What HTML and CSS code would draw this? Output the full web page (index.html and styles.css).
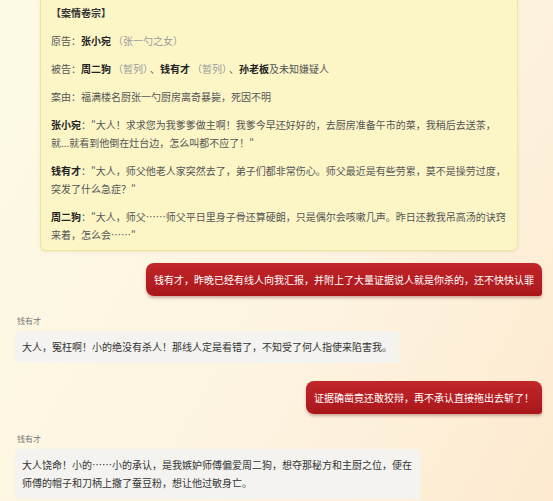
FILE: index.html
```html
<!DOCTYPE html>
<html lang="zh-CN">
<head>
  <meta charset="UTF-8" />
  <meta name="viewport" content="width=device-width, initial-scale=1.0"/>
  <title>案情审讯</title>
  <link rel="stylesheet" href="styles.css">
</head>
<body>
  <div class="chat">
    <div class="case-card">
      <p class="case-title">【案情卷宗】</p>
      <p>原告：<b>张小宛</b><span class="note">（张一勺之女）</span></p>
      <p>被告：<b>周二狗</b><span class="note">（暂列）</span>、<b>钱有才</b><span class="note">（暂列）</span>、<b>孙老板</b>及未知嫌疑人</p>
      <p>案由：福满楼名厨张一勺厨房离奇暴毙，死因不明</p>
      <p><b>张小宛</b><span>："大人！求求您为我爹爹做主啊！我爹今早还好好的，去厨房准备午市的菜，我稍后去送茶，就...就看到他倒在灶台边，怎么叫都不应了！"</span></p>
      <p><b>钱有才</b><span>："大人，师父他老人家突然去了，弟子们都非常伤心。师父最近是有些劳累，莫不是操劳过度，突发了什么急症？"</span></p>
      <p><b>周二狗</b><span>："大人，师父……师父平日里身子骨还算硬朗，只是偶尔会咳嗽几声。昨日还教我吊高汤的诀窍来着，怎么会……"</span></p>
    </div>

    <div class="msg msg-out">
      <div class="bubble bubble-red">钱有才，昨晚已经有线人向我汇报，并附上了大量证据说人就是你杀的，还不快快认罪</div>
    </div>

    <div class="msg msg-in">
      <div class="sender">钱有才</div>
      <div class="bubble bubble-grey">大人，冤枉啊！小的绝没有杀人！那线人定是看错了，不知受了何人指使来陷害我。</div>
    </div>

    <div class="msg msg-out">
      <div class="bubble bubble-red">证据确凿竟还敢狡辩，再不承认直接拖出去斩了！</div>
    </div>

    <div class="msg msg-in">
      <div class="sender">钱有才</div>
      <div class="bubble bubble-grey">大人饶命！小的……小的承认，是我嫉妒师傅偏爱周二狗，想夺那秘方和主厨之位，便在师傅的帽子和刀柄上撒了蚕豆粉，想让他过敏身亡。</div>
    </div>
  </div>
</body>
</html>
```

FILE: styles.css
```css
body {
  margin: 0;
  height: 100vh;
  overflow: hidden;
  font-family: "Noto Sans CJK SC", "Noto Sans", sans-serif;
  font-size: 10px;
  color: #333;
  background: linear-gradient(120deg, #fcfae5 0%, #fdf3e0 60%, #fdeacf 100%);
}

.chat {
  display: flex;
  flex-direction: column;
  padding: 0 11px 0 15px;
}

.case-card {
  margin-left: 25px;
  width: 456px;
  padding: 4px 10px 6px;
  background: #fcf6c7;
  border: 1px solid #efe5a3;
  border-top: none;
  border-radius: 0 0 6px 6px;
  box-shadow: 0 1px 3px rgba(160, 140, 60, 0.15);
  color: #555;
}

.case-card p {
  margin: 10px 0 0;
  line-height: 18px;
}

.case-card p:first-child {
  margin-top: 0;
}

.case-card b {
  color: #222;
}

.case-title {
  font-weight: bold;
  color: #333;
}

.note {
  color: #999;
  margin: 0 2px;
}

.msg {
  display: flex;
  flex-direction: column;
}

.msg-out {
  align-items: flex-end;
  margin-top: 12px;
}

.msg-in {
  align-items: flex-start;
  margin-top: 19px;
}

.msg-in + .msg-out {
  margin-top: 18px;
}

.sender {
  font-size: 8px;
  line-height: 12px;
  color: #777;
  margin: 0 0 4px 2px;
}

.bubble {
  line-height: 17px;
  padding: 8px;
}

.bubble-red {
  color: #fff;
  background: linear-gradient(#c1262a, #a9171b);
  border-radius: 8px 8px 3px 8px;
  box-shadow: 0 2px 3px rgba(90, 10, 10, 0.3);
}

.bubble-grey {
  max-width: 391px;
  padding: 7px;
  line-height: 18px;
  color: #333;
  background: #f4f3f0;
  border-radius: 4px;
}
```
